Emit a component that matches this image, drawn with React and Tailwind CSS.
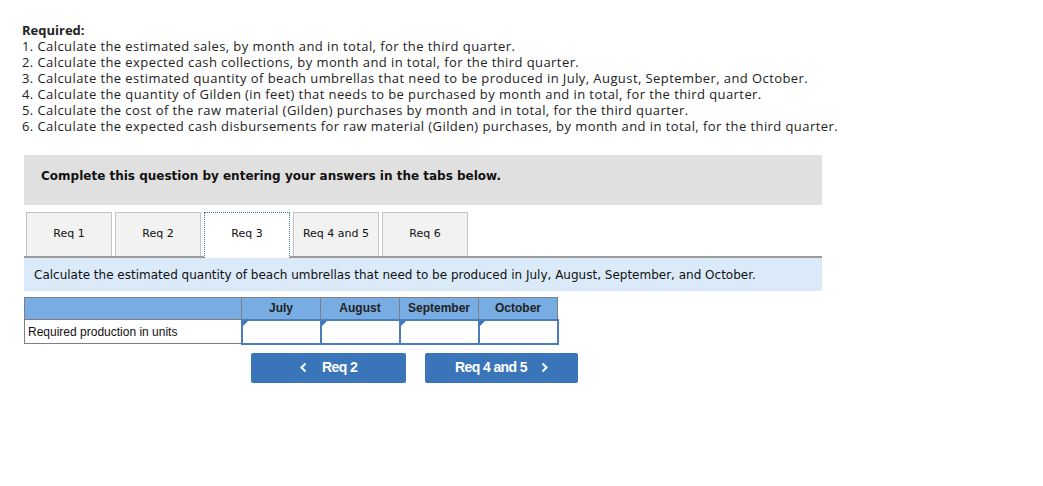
import React from 'react';

const required = [
  '1. Calculate the estimated sales, by month and in total, for the third quarter.',
  '2. Calculate the expected cash collections, by month and in total, for the third quarter.',
  '3. Calculate the estimated quantity of beach umbrellas that need to be produced in July, August, September, and October.',
  '4. Calculate the quantity of Gilden (in feet) that needs to be purchased by month and in total, for the third quarter.',
  '5. Calculate the cost of the raw material (Gilden) purchases by month and in total, for the third quarter.',
  '6. Calculate the expected cash disbursements for raw material (Gilden) purchases, by month and in total, for the third quarter.',
];

const tabs = ['Req 1', 'Req 2', 'Req 3', 'Req 4 and 5', 'Req 6'];
const months = ['July', 'August', 'September', 'October'];

const InputCell = () => (
  <td className="relative h-[24px] w-[79px] border-2 border-[#4a7dbb] bg-white p-0">
    <span className="absolute left-0 top-0 h-0 w-0 border-l-[5px] border-b-[5px] border-l-[#3f73b5] border-b-transparent" />
  </td>
);

const Chevron = ({ dir }) => (
  <svg width="7" height="11" viewBox="0 0 7 11" fill="none">
    <polyline
      points={dir === 'left' ? '5.5,1.5 1.5,5.5 5.5,9.5' : '1.5,1.5 5.5,5.5 1.5,9.5'}
      stroke="white"
      strokeWidth="2"
    />
  </svg>
);

export default function App() {
  return (
    <div className="min-h-screen bg-white pl-[22px] pt-[22px]">
      {/* Required list */}
      <div
        className="text-[13px] leading-[16px] tracking-[0.42px] text-[#222]"
        style={{ fontFamily: '"Open Sans", "Liberation Sans", sans-serif' }}
      >
        <div className="font-bold tracking-normal">Required:</div>
        {required.map((line) => (
          <div key={line}>{line}</div>
        ))}
      </div>

      <div className="ml-[2px] mt-[21px] w-[798px]" style={{ fontFamily: '"DejaVu Sans", Verdana, sans-serif' }}>
        <div className="h-[50px] bg-[#e0e0e0] pl-[17px] pt-[12px] text-[12px] font-bold text-[#111]">
          Complete this question by entering your answers in the tabs below.
        </div>

        {/* Tabs */}
        <div className="mt-[7px] flex gap-[3px] pl-[2px]">
          {tabs.map((t) =>
            t === 'Req 3' ? (
              <div
                key={t}
                className="relative z-10 -mb-[2px] flex h-[46px] w-[86px] items-center justify-center border border-b-0 border-dotted border-[#4f6f9f] bg-white pb-[2px] text-[11px] text-[#111]"
              >
                {t}
              </div>
            ) : (
              <div
                key={t}
                className="flex h-[44px] w-[86px] items-center justify-center border border-b-0 border-[#c4c4c4] bg-[#f2f2f2] text-[11px] text-[#111]"
              >
                {t}
              </div>
            )
          )}
        </div>

        <div className="flex h-[35px] items-center border-t-2 border-[#9a9a9a] bg-[#daeaf8] pl-[10px] text-[12px] text-[#111]">
          Calculate the estimated quantity of beach umbrellas that need to be produced in July, August, September, and October.
        </div>

        {/* Table */}
        <table
          className="mt-[6px] border-collapse text-[12px]"
          style={{ fontFamily: '"Liberation Sans", Arial, sans-serif' }}
        >
          <thead>
            <tr className="h-[22px] bg-[#78ade3]">
              <th className="w-[217px] border border-[#7f7f7f]" />
              {months.map((m) => (
                <th key={m} className="w-[79px] border border-[#7f7f7f] text-center font-bold text-[#222]">
                  {m}
                </th>
              ))}
            </tr>
          </thead>
          <tbody>
            <tr>
              <td className="h-[23px] border border-[#7f7f7f] pl-[3px] text-left text-[#111]">Required production in units</td>
              {months.map((m) => (
                <InputCell key={m} />
              ))}
            </tr>
          </tbody>
        </table>

        {/* Nav buttons */}
        <div
          className="ml-[227px] mt-[8px] flex gap-[19px] text-[14px] font-bold text-white"
          style={{ fontFamily: '"Liberation Sans Narrow", "Liberation Sans", Arial, sans-serif' }}
        >
          <button className="flex h-[30px] w-[155px] items-center justify-center gap-[15px] rounded-[2px] bg-[#3a75b9]">
            <Chevron dir="left" />
            <span className="tracking-[-0.6px]">Req 2</span>
          </button>
          <button className="flex h-[30px] w-[153px] items-center justify-center gap-[14px] rounded-[2px] bg-[#3a75b9]">
            <span className="tracking-[-0.6px]">Req 4 and 5</span>
            <Chevron dir="right" />
          </button>
        </div>
      </div>
    </div>
  );
}
